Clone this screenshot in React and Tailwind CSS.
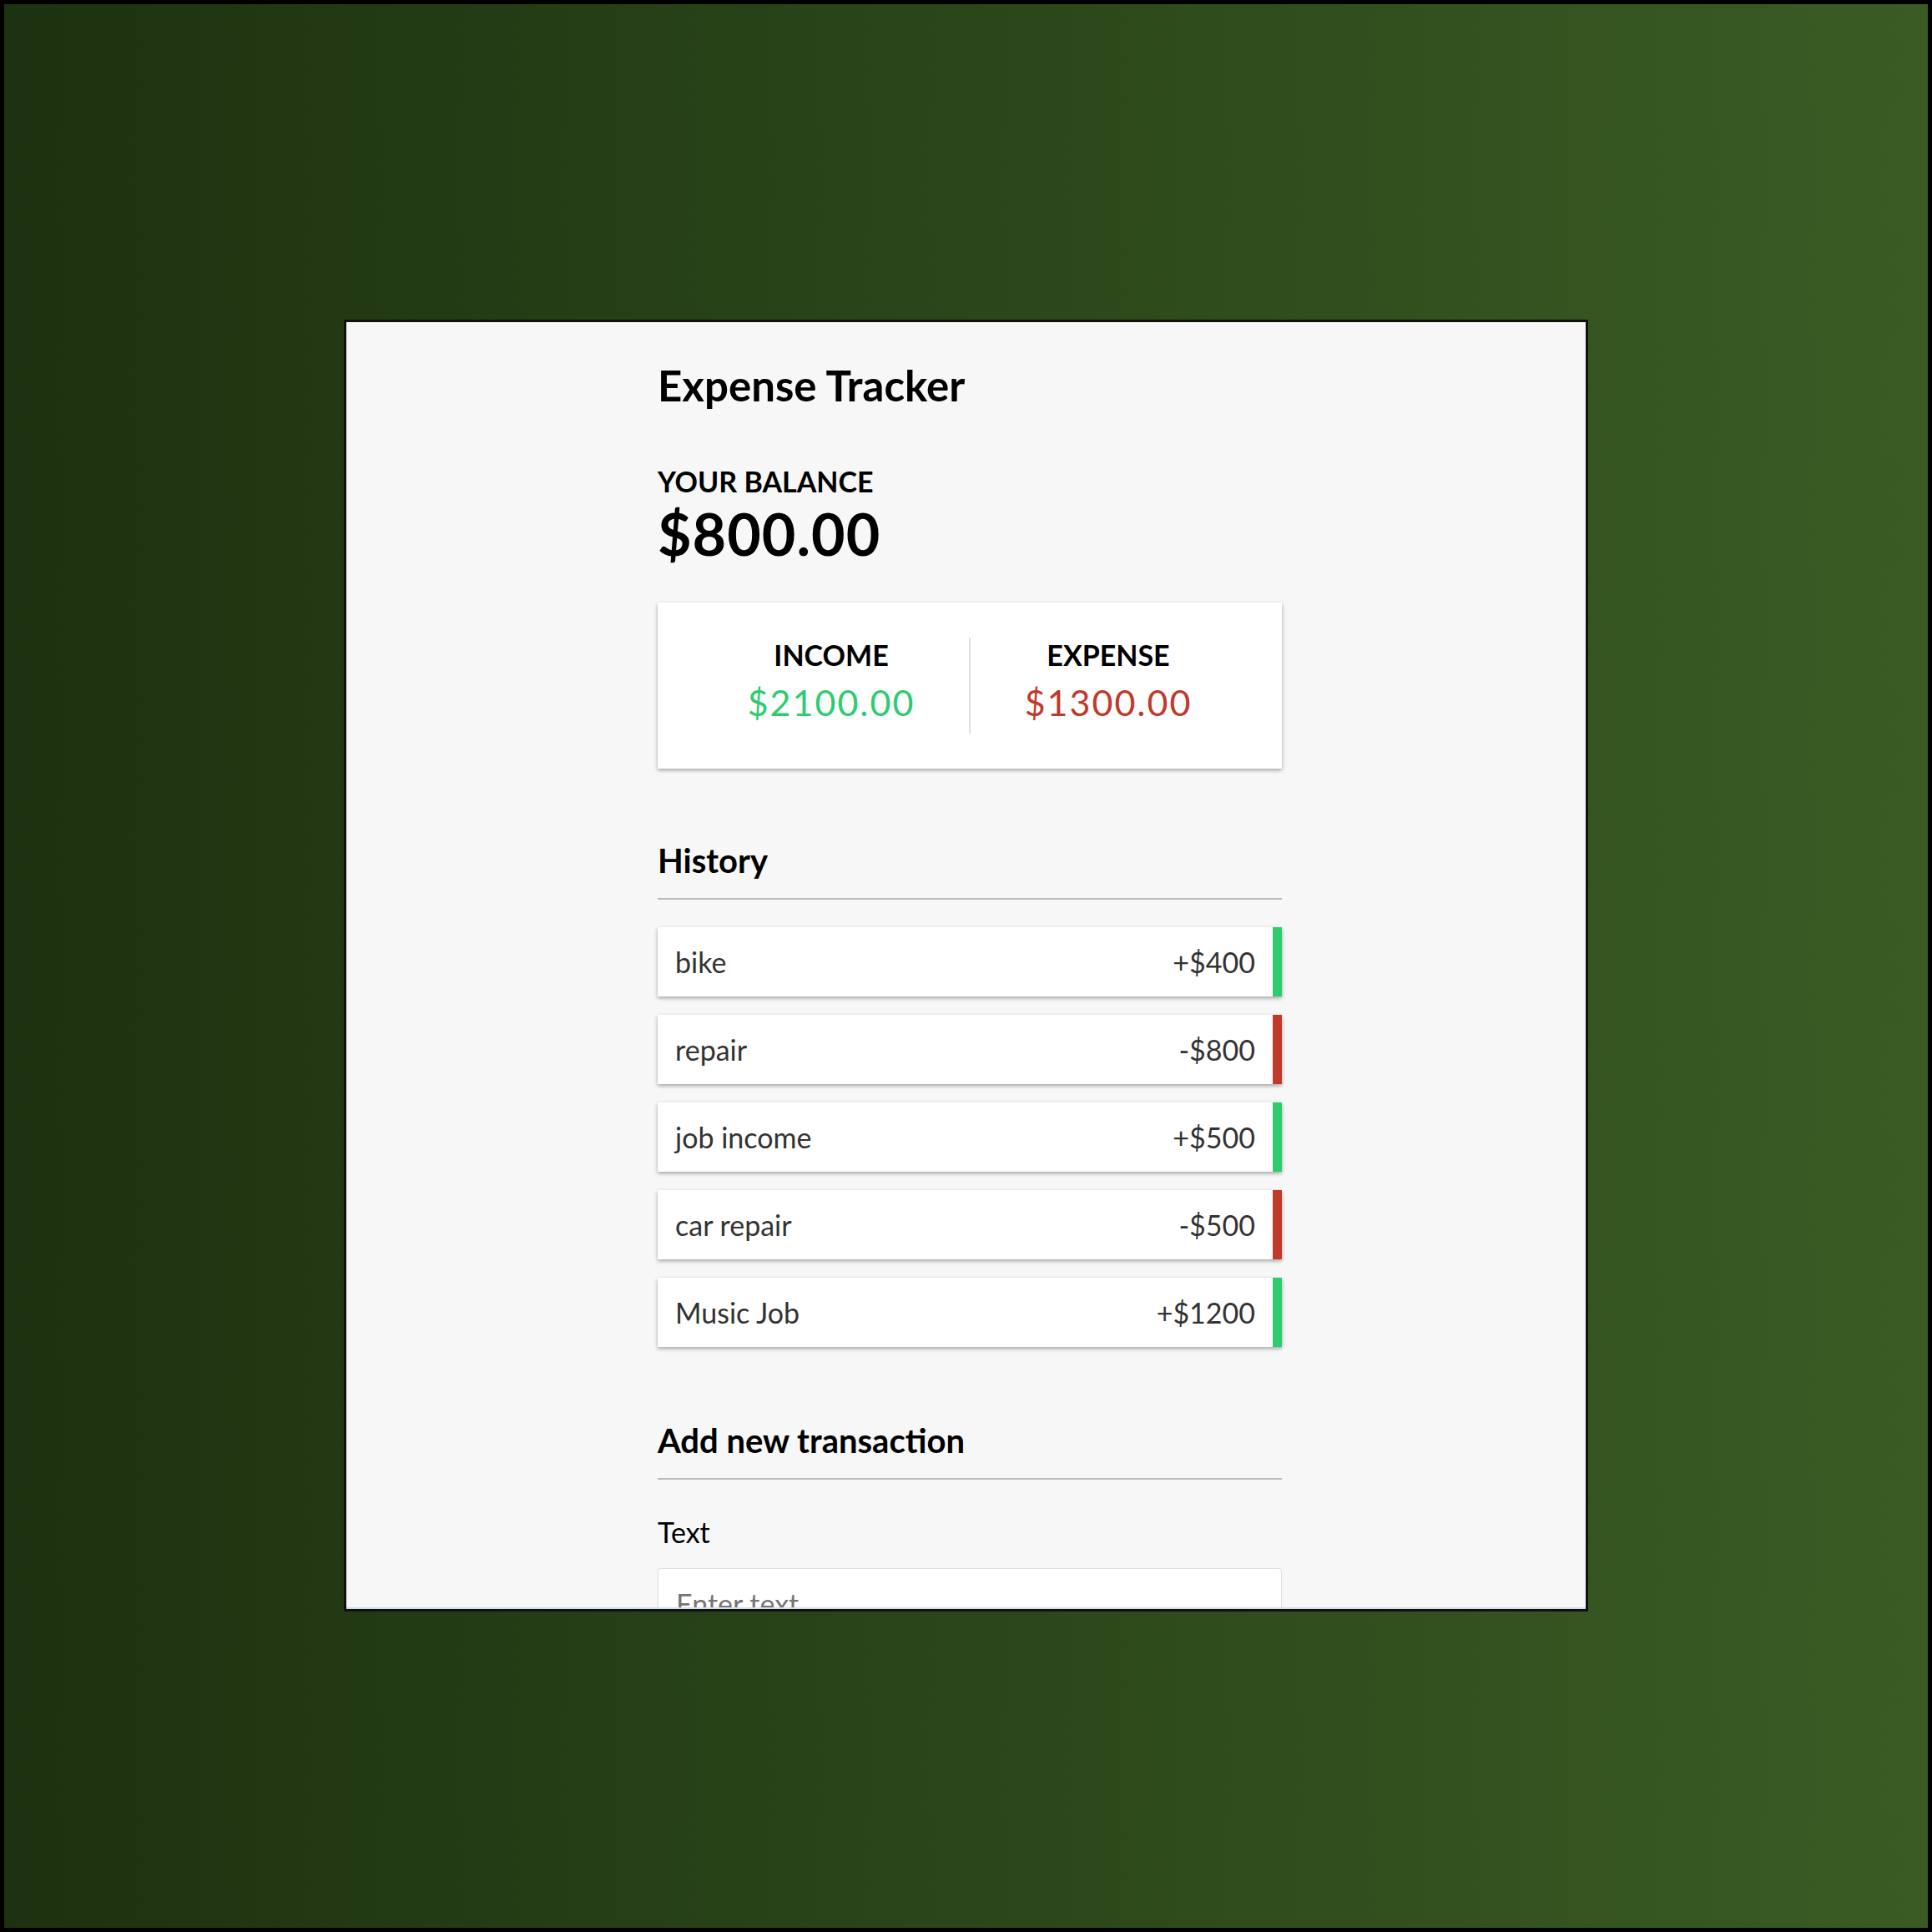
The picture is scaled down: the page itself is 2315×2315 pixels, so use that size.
import React from "react";

const transactions = [
  { id: 1, text: "bike", amount: 400 },
  { id: 2, text: "repair", amount: -800 },
  { id: 3, text: "job income", amount: 500 },
  { id: 4, text: "car repair", amount: -500 },
  { id: 5, text: "Music Job", amount: 1200 },
];

const App = () => {
  const amounts = transactions.map((t) => t.amount);
  const total = amounts.reduce((a, b) => a + b, 0).toFixed(2);
  const income = amounts.filter((a) => a > 0).reduce((a, b) => a + b, 0).toFixed(2);
  const expense = (amounts.filter((a) => a < 0).reduce((a, b) => a + b, 0) * -1).toFixed(2);

  return (
    <div className="w-[2315px] h-[2315px] border-[5px] border-black bg-linear-to-r from-[#1d3210] to-[#3a5c24] pt-[378px] pl-[407px] font-['Lato',sans-serif]">
      <div className="w-[1491px] h-[1548px] border-[3px] border-[#111] bg-[#f7f7f7] flex flex-col overflow-hidden">
        <div className="flex-1 overflow-hidden pl-[373px] pt-[43px] border-b-2 border-[#cfe0ec]">
          <div className="w-[748px] flex flex-col">
            <h1 className="text-[51px] leading-[65px] font-bold text-black">Expense Tracker</h1>

            <h4 className="mt-[62px] text-[34px] leading-[41px] font-bold uppercase text-black">Your Balance</h4>
            <h1 className="text-[70px] leading-[84px] font-bold text-black tracking-[1px]">${total}</h1>

            <div className="mt-[41px] bg-white shadow-[0_2px_6px_rgba(0,0,0,0.12),0_2px_4px_rgba(0,0,0,0.24)] px-[43px] py-[42px] flex">
              <div className="flex-1 text-center border-r-2 border-[#dedede]">
                <h4 className="text-[34px] leading-[41px] font-bold uppercase text-black">Income</h4>
                <p className="my-[11px] text-[43px] leading-[52px] tracking-[2px] text-[#2ecc71]">${income}</p>
              </div>
              <div className="flex-1 text-center">
                <h4 className="text-[34px] leading-[41px] font-bold uppercase text-black">Expense</h4>
                <p className="my-[11px] text-[43px] leading-[52px] tracking-[2px] text-[#c0392b]">${expense}</p>
              </div>
            </div>

            <h3 className="mt-[86px] text-[40px] leading-[48px] font-bold text-black pb-[21px] border-b-2 border-[#bbb]">History</h3>
            <ul className="mt-[33px] flex flex-col gap-[22px]">
              {transactions.map((t) => (
                <li
                  key={t.id}
                  className={`h-[83px] bg-white shadow-[0_2px_6px_rgba(0,0,0,0.12),0_2px_4px_rgba(0,0,0,0.24)] flex items-center justify-between pl-[21px] pr-[21px] text-[34px] leading-[41px] text-[#333] border-r-[11px] ${t.amount < 0 ? "border-[#c0392b]" : "border-[#2ecc71]"}`}
                >
                  <span>{t.text}</span>
                  <span>{t.amount < 0 ? "-" : "+"}${Math.abs(t.amount)}</span>
                </li>
              ))}
            </ul>

            <h3 className="mt-[88px] text-[40px] leading-[48px] font-bold text-black pb-[21px] border-b-2 border-[#bbb]">Add new transaction</h3>
            <form>
              <div>
                <label className="inline-block mt-[42px] text-[34px] leading-[41px] text-black">Text</label>
                <input
                  type="text"
                  placeholder="Enter text"
                  className="mt-[23px] block w-full bg-white border border-[#dedede] rounded-[4px] px-[21px] py-[21px] text-[34px] leading-[41px] placeholder:text-[#757575] outline-none"
                />
              </div>
            </form>
          </div>
        </div>
      </div>
    </div>
  );
};

export default App;
